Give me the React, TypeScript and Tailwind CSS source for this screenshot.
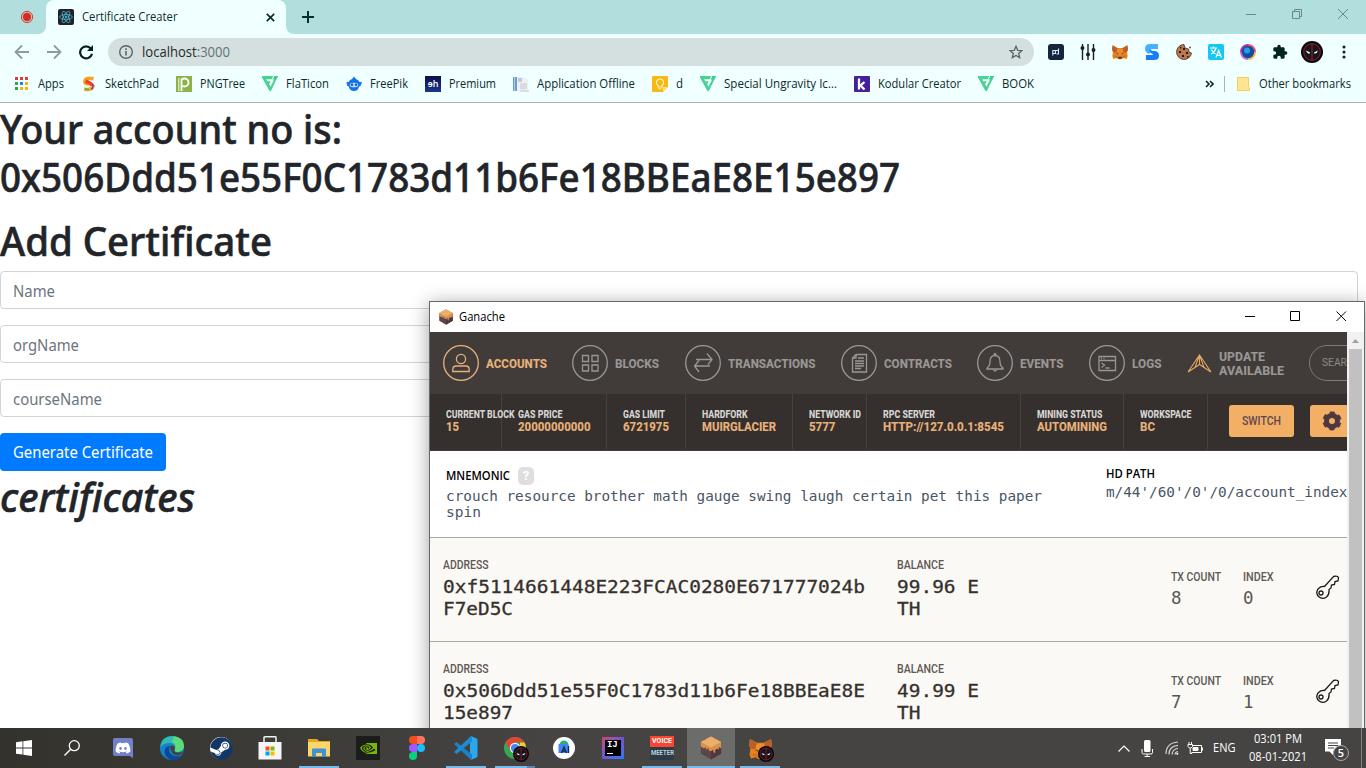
import { useLayoutEffect, useRef, useState, type ReactNode } from "react";
import { FaDiscord, FaSteam } from "react-icons/fa";
import { SiNvidia } from "react-icons/si";

/* Text set to an exact advance width, whatever the substitute font measures. */
function T({ w, className = "", children }: { w: number; className?: string; children: ReactNode }) {
  const ref = useRef<HTMLSpanElement>(null);
  const [scale, setScale] = useState(1);
  useLayoutEffect(() => {
    if (ref.current && ref.current.offsetWidth) {
      const box = ref.current.getBoundingClientRect();
      setScale((s) => w / (box.width / s));
    }
  }, [w]);
  return (
    <span className={`block shrink-0 whitespace-pre ${className}`} style={{ width: w }}>
      <span ref={ref} className="inline-block origin-left" style={{ transform: `scaleX(${scale})` }}>
        {children}
      </span>
    </span>
  );
}

const Flaticon = () => (
  <svg width="16" height="16" viewBox="0 0 16 16">
    <path d="M0 0h11.500L9.800 3.200H4.200l1 2h3.600L7.300 8.200l1.200 2.600L13.800 0H16L9.200 14.500Q8.200 16 7.200 14.500L0 1.500Z" fill="#4ad295" />
    <path d="M12 0h4l-1.700 3.400h-4Z" fill="#3bd08c" />
    <path d="M11.800 0L7.600 8.300" stroke="#f0ffff" strokeWidth=".8" />
  </svg>
);

const AppsIcon = () => (
  <svg width="16" height="16" viewBox="0 0 16 16">
    <path d="M1 1h3v3H1zM6 1h3v3H6zM11 1h3v3h-3z" fill="#e53935" />
    <path d="M1 6h3v3H1z" fill="#34a853" />
    <path d="M6 6h3v3H6z" fill="#2f7cf0" />
    <path d="M11 6h3v3h-3zM6 11h3v3H6zM11 11h3v3h-3z" fill="#f9b208" />
    <path d="M1 11h3v3H1z" fill="#2e9e4b" />
  </svg>
);

const SketchPadIcon = () => (
  <svg width="16" height="16" viewBox="0 0 16 16" fill="none" strokeWidth="3.600">
    <path d="M12.500 2.800Q5 1 4 4.500T8 8" stroke="#f9a21b" />
    <path d="M4.500 5Q12 8 12 11" stroke="#e7452f" />
    <path d="M12 10Q11 14.500 3 13.200" stroke="#f2b61d" />
    <path d="M11 8.500q2 3-1 5" stroke="#8b3fb0" strokeWidth="1.500" />
    <path d="M4 12.500q2 1.500 4 1" stroke="#54a847" strokeWidth="1.500" />
  </svg>
);

const PngTreeIcon = () => (
  <svg width="16" height="16" viewBox="0 0 16 16" fill="none">
    <path d="M0 0h16v16H0z" fill="#8db348" />
    <path d="M5.500 15V2.500M5.500 3.500q1.500-1 3-1a4 4 0 0 1 0 8Q7 10.500 5.500 9.800" stroke="#fff" strokeWidth="1.800" />
    <path d="M2.800 2v13" stroke="#fff" strokeWidth=".9" />
  </svg>
);

const FreepikIcon = () => (
  <svg width="16" height="16" viewBox="0 0 16 16">
    <path d="M6 3l2-2.500L10 3q2.500 1 3.500 3H16l-1.500 4-1.500.5Q12 15 8 15t-5.200-4.500L1 9.500.500 6h2Q3.500 4 6 3Z" fill="#1473e6" />
    <ellipse cx="8" cy="9" rx="4.200" ry="2.300" fill="#b9dcff" />
    <circle cx="6" cy="8.800" r="1.200" fill="#1456c0" />
    <circle cx="10" cy="8.800" r="1.200" fill="#1456c0" />
  </svg>
);

const DhIcon = () => (
  <span className="flex h-4 w-4 items-center justify-center bg-linear-to-b from-[#0a1146] to-[#1a3591] font-['Open_Sans',sans-serif] text-[9px] font-semibold text-white">
    ɘh
  </span>
);

const DocIcon = () => (
  <svg width="16" height="16" viewBox="0 0 16 16">
    <path d="M0 1h4v14H0z" fill="#6a9fcf" />
    <path d="M1.500 1v14" stroke="#a8cdea" />
    <path d="M4 1h8l3 3v11H4z" fill="#eef0f4" />
    <path d="M5 2h4v4H5z" fill="#c4cad4" />
    <path d="M7 8h7M7 10h7M7 12h7M7 15h9" stroke="#b5bac6" strokeWidth=".8" />
  </svg>
);

const KeepIcon = () => (
  <svg width="16" height="16" viewBox="0 0 16 16" fill="none">
    <path d="M1 0h14q1 0 1 1v10l-5 5H1q-1 0-1-1V1q0-1 1-1Z" fill="#f5b912" />
    <path d="M16 11l-5 5v-5Z" fill="#fbe08a" />
    <path d="M6 9.500C3.500 8 4 3 8 3s4.500 5 2 6.500V11H6ZM6.500 12.700h3" stroke="#fff3cf" strokeWidth="1.100" />
  </svg>
);

const KodularIcon = () => (
  <svg width="16" height="16" viewBox="0 0 16 16">
    <rect width="16" height="16" rx="1" fill="#44209c" />
    <path d="M5 2.500v11M10.500 6l-4 3.500 4 4" stroke="#fff" strokeWidth="2.300" fill="none" />
  </svg>
);

const bookmarks: [ReactNode, string, number][] = [
  [<AppsIcon />, "Apps", 26],
  [<SketchPadIcon />, "SketchPad", 54],
  [<PngTreeIcon />, "PNGTree", 45],
  [<Flaticon />, "FlaTicon", 43],
  [<FreepikIcon />, "FreePik", 38],
  [<DhIcon />, "Premium", 47],
  [<DocIcon />, "Application Offline", 98],
  [<KeepIcon />, "d", 7],
  [<Flaticon />, "Special Ungravity Ic...", 113],
  [<KodularIcon />, "Kodular Creator", 83],
  [<Flaticon />, "BOOK", 32],
];

const Fox = ({ size }: { size: number }) => (
  <svg width={size} height={size} viewBox="0 0 24 24">
    <path d="M1 2l7.500 4h7L23 2l1 6-1.500 4.500L23.500 18 22 22.500l-5-1.500-2.500 2h-5L7 21l-5 1.500L.500 18 1.500 12.500 0 8Z" fill="#e8821e" />
    <path d="M1 2l8 5-1.500 6-6-1L0 8ZM23 2l-8 5 1.500 6 6-1L24 8Z" fill="#b9602a" />
    <path d="M8 7h8l1.500 6L12 16l-5.500-3Z" fill="#f08c2e" />
    <path d="M6 13l3 .5.500 2ZM18 13l-3 .5-.5 2Z" fill="#40302a" />
    <path d="M9.500 20l.5-1h4l.5 1-.5 2h-4Z" fill="#4a342a" />
    <path d="M2 18l6-1 1 4-2 .500ZM22 18l-6-1-1 4 2 .500Z" fill="#d0731f" />
  </svg>
);

const Deadpool = ({ size }: { size: number }) => (
  <svg width={size} height={size} viewBox="0 0 22 22">
    <circle cx="11" cy="11" r="11" fill="#08080b" />
    <circle cx="11" cy="11" r="8.300" fill="#16161b" stroke="#7c1c2e" strokeWidth="1.200" />
    <path d="M11 2.500v17" stroke="#7c1c2e" strokeWidth="1.400" />
    <path d="M5 9.500l4 2-.5 1.200q-2.700-.200-3.500-3.200ZM17 9.500l-4 2 .5 1.200q2.700-.200 3.500-3.200Z" fill="#fff" />
  </svg>
);

const Cake = ({ size }: { size: number }) => (
  <svg width={size} height={size} viewBox="0 0 24 26">
    <path d="M1 7l11 6 11-6v12l-11 6.500L1 19Z" fill="#5e454b" />
    <path d="M12 13l11-6v12l-11 6.500Z" fill="#503840" />
    <path d="M12 .500L23 6.500v7l-2.500-1.500v3l-2-1.500-2 2v3l-2-1v-3l-2.500 2-2.500-1v-2.500L6.500 15V12l-2 1.500L1 11.500v-5Z" fill="#d9924c" />
    <path d="M12 .500l11 6-11 6-11-6Z" fill="#eaaf68" />
  </svg>
);

function Extensions() {
  return (
    <div className="flex items-center gap-4 pl-[14px]">
      <svg width="16" height="16" viewBox="0 0 16 16">
        <rect width="16" height="16" rx="3" fill="#12263f" />
        <path d="M4.800 11.500V6.500h2.700v3H5M8.500 10h2V4.500M7.500 6.500h3.500" stroke="#dfe6ee" strokeWidth="1.100" fill="none" />
      </svg>
      <svg width="16" height="16" viewBox="0 0 16 16" stroke="#1a2024" strokeWidth="1.400" fill="#1a2024">
        <path d="M2.500 0v16M8 0v16M13.500 0v16" />
        <circle cx="2.500" cy="4" r="1.300" />
        <circle cx="8" cy="10.500" r="1.300" />
        <circle cx="13.500" cy="6" r="1.300" />
      </svg>
      <Fox size={16} />
      <svg width="16" height="16" viewBox="0 0 16 16" fill="none">
        <path d="M14 0v5H8Q6 5 8 7L5 10Q1 8 1 5 1 0 6 0Z" fill="#45b1ff" />
        <path d="M5.500 5.500Q7 7 10 7q5 0 5 4.500T10 16H2v-5h6q2 0 0-1.500-3-1-2.500-4Z" fill="#187df5" />
      </svg>
      <svg width="16" height="16" viewBox="0 0 16 16">
        <path d="M8 .500a7.500 7.500 0 1 0 7.500 8.500L13 8l-.5-3L9 4Z" fill="#b97850" stroke="#4a2c20" strokeWidth=".8" />
        <path d="M3 7h2v2H3zM7 4h2v2H7zM6 11h2v2H6zM10 8h2v2h-2zM11 12h1.500v1.500H11zM4 3h1.500v1.500H4z" fill="#2c1811" />
        <circle cx="14" cy="3.500" r=".9" fill="#6b3f2b" />
      </svg>
      <svg width="16" height="16" viewBox="0 0 16 16" fill="none" stroke="#fff" strokeWidth="1.200">
        <rect width="16" height="16" rx="2" fill="#13c8f5" stroke="none" />
        <path d="M2 4h7M5.500 2.500V4M3 10q4-2 5-6M3.500 5.500q1 3 4 4.500M8 13.500l2.700-7 2.700 7M9 11.300h3.500" />
      </svg>
      <svg width="16" height="16" viewBox="0 0 16 16" fill="none">
        <circle cx="8" cy="8" r="7.300" fill="#0c4f9e" />
        <path d="M8 .900A7.100 7.100 0 0 1 15.100 8" stroke="#f04f78" strokeWidth="1.800" />
        <path d="M15.100 8A7.100 7.100 0 0 1 8 15.100" stroke="#ffb25a" strokeWidth="1.800" />
        <path d="M8 15.100A7.100 7.100 0 0 1 .900 8" stroke="#c06bd6" strokeWidth="1.800" />
        <path d="M.900 8A7.100 7.100 0 0 1 8 .900" stroke="#c02f9e" strokeWidth="1.800" />
        <circle cx="7" cy="6.500" r="3" fill="#2d9ae8" />
      </svg>
      <svg width="16" height="16" viewBox="0 0 24 24" fill="#00251f">
        <path d="M20.500 11H19V7c0-1.100-.9-2-2-2h-4V3.500a2.500 2.500 0 0 0-5 0V5H4c-1.100 0-2 .9-2 2v3.800h1.500a2.700 2.700 0 0 1 0 5.400H2V20c0 1.100.9 2 2 2h3.800v-1.500a2.700 2.700 0 0 1 5.400 0V22H17c1.100 0 2-.9 2-2v-4h1.500a2.500 2.500 0 0 0 0-5z" />
      </svg>
      <div className="-ml-[3px] flex items-center gap-[19px]">
        <Deadpool size={22} />
        <svg width="4" height="16" viewBox="0 0 4 16" fill="#00251f">
          <circle cx="2" cy="3" r="1.500" />
          <circle cx="2" cy="8" r="1.500" />
          <circle cx="2" cy="13" r="1.500" />
        </svg>
      </div>
    </div>
  );
}

function Browser() {
  return (
    <header className="shrink-0 font-['Open_Sans','Noto_Sans',sans-serif] text-[12px] text-[#0b2a2a]">
      <div className="flex h-[34px] bg-[#b1dfdd]">
        <div className="flex w-[46px] justify-end bg-[#f0ffff]">
          <div className="flex h-full w-full items-center justify-center rounded-br-lg bg-[#b1dfdd] pl-2">
            <svg width="14" height="14" viewBox="0 0 14 14">
              <circle cx="7" cy="7" r="5.600" fill="none" stroke="#dc362b" strokeWidth="1" />
              <circle cx="7" cy="7" r="4.200" fill="#dc2a20" />
            </svg>
          </div>
        </div>
        <div className="bg-[#b1dfdd]">
          <div className="flex h-full w-[240px] items-center rounded-t-lg bg-[#f0ffff] pl-3">
            <svg width="16" height="16" viewBox="0 0 16 16" fill="none" stroke="#4fb8d3" strokeWidth=".8">
              <rect width="16" height="16" rx="2" fill="#20232a" stroke="none" />
              <ellipse cx="8" cy="8" rx="6.300" ry="2.500" />
              <ellipse cx="8" cy="8" rx="6.300" ry="2.500" transform="rotate(60 8 8)" />
              <ellipse cx="8" cy="8" rx="6.300" ry="2.500" transform="rotate(120 8 8)" />
              <circle cx="8" cy="8" r="1" fill="#4fb8d3" />
            </svg>
            <T w={95.5} className="ml-2">Certificate Creater</T>
            <svg className="ml-[88px]" width="9" height="9" viewBox="0 0 9 9" stroke="#0b2a2a" strokeWidth="1.700">
              <path d="M.800.800l7.400 7.400M8.200.800L.800 8.200" />
            </svg>
          </div>
        </div>
        <div className="bg-[#f0ffff]">
          <div className="flex h-full w-[960px] items-center rounded-bl-lg bg-[#b1dfdd] pl-4">
            <svg width="12" height="12" viewBox="0 0 12 12" stroke="#04302c" strokeWidth="2">
              <path d="M6 0v12M0 6h12" />
            </svg>
          </div>
        </div>
        <div className="flex flex-1 items-start gap-[36px] pt-[9px]">
          <svg className="shrink-0" width="10" height="10" viewBox="0 0 10 10" stroke="#6b8685" fill="none">
            <path d="M0 5.500h10" />
          </svg>
          <svg className="shrink-0" width="10" height="10" viewBox="0 0 10 10" stroke="#6b8685" fill="none">
            <path d="M.500 2.500h7v7h-7zM2.500 2.500v-2h7v7h-2" />
          </svg>
          <svg className="shrink-0" width="10" height="10" viewBox="0 0 10 10" stroke="#6b8685" fill="none">
            <path d="M0 0l10 10M10 0L0 10" />
          </svg>
        </div>
      </div>

      <div className="flex h-9 items-center bg-[#f0ffff] pl-[14px]">
        <svg width="80" height="16" viewBox="0 0 80 16" fill="none">
          <path d="M15 8H2M8 1.500L1.500 8 8 14.500" stroke="#8a9d9d" strokeWidth="1.800" />
          <path d="M33 8h13M40 1.500L46.500 8 40 14.500" stroke="#8a9d9d" strokeWidth="1.800" />
          <path d="M76.800 4.500A6 6 0 1 0 78 9.700" stroke="#04211f" strokeWidth="2.200" />
          <path d="M79 1v6h-6z" fill="#04211f" />
        </svg>
        <div className="ml-[14px] flex h-7 w-[926px] items-center rounded-full bg-[#d4e0df] pl-[11px] pr-[11px]">
          <svg width="14" height="14" viewBox="0 0 14 14" fill="none" stroke="#5a6464">
            <circle cx="7" cy="7" r="6.300" strokeWidth="1.400" />
            <path d="M7 6v4.500M7 3.300v1.600" strokeWidth="1.600" />
          </svg>
          <T w={88} className="ml-[9px] pb-px text-[14px]">
            <span className="text-[#1f2b2b]">localhost</span>
            <span className="text-[#657272]">:3000</span>
          </T>
          <svg className="ml-auto" width="14" height="14" viewBox="0 0 14 14" fill="none" stroke="#5a6464" strokeWidth="1.300">
            <path d="M7 1.300l1.700 4 4.300.300-3.300 2.800 1 4.200L7 10.400l-3.700 2.200 1-4.200L1 5.600l4.300-.300Z" />
          </svg>
        </div>
        <Extensions />
      </div>

      <div className="flex h-[33px] items-center border-b border-[#a9b5b5] bg-[#f0ffff] pb-[5px] pl-[14px]">
        <div className="flex gap-[17px]">
          {bookmarks.map(([icon, label, w], i) => (
            <div key={i} className="flex items-center gap-2">
              <span className="block w-4">{icon}</span>
              <T w={w}>{label}</T>
            </div>
          ))}
        </div>
        <svg className="ml-[171px]" width="9" height="8" viewBox="0 0 9 8" fill="none" stroke="#0b2a2a" strokeWidth="1.600">
          <path d="M1 1l3 3-3 3M5 1l3 3-3 3" />
        </svg>
        <span className="ml-[10px] h-4 w-px bg-[#a3b8b8]" />
        <svg className="ml-3" width="13" height="14" viewBox="0 0 13 14">
          <path d="M.500.500h11v9l1 1v3H.500z" fill="#ffe591" stroke="#f2cd5b" />
        </svg>
        <T w={92} className="ml-[9px]">Other bookmarks</T>
      </div>
    </header>
  );
}

const h1 = "text-[39.500px] leading-[48px] font-medium text-[#212529] [-webkit-text-stroke:0.6px_#212529]";

function Field({ label, w }: { label: string; w: number }) {
  return (
    <div className="mb-4 flex h-[38px] items-center rounded border border-[#ced4da] bg-white px-3 pt-[3px] text-[#6c757d]">
      <T w={w}>{label}</T>
    </div>
  );
}

function Page() {
  return (
    <main className="h-full bg-white pt-[2px] font-['Noto_Sans','Open_Sans',sans-serif] text-[15.500px]">
      <T w={342} className={h1}>Your account no is:</T>
      <T w={900} className={h1}>0x506Ddd51e55F0C1783d11b6Fe18BBEaE8E15e897</T>
      <T w={272} className={`${h1} mt-4`}>Add Certificate</T>
      <div className="mt-[6px] w-[1358px]">
        <Field label="Name" w={42} />
        <Field label="orgName" w={66} />
        <Field label="courseName" w={89} />
      </div>
      <button className="flex h-[38px] w-[166px] items-center rounded bg-[#007bff] pl-[13px] pt-[2px] text-white">
        <T w={140}>Generate Certificate</T>
      </button>
      <T w={195} className={`${h1} mt-[2px] italic`}>certificates</T>
    </main>
  );
}

const navIcons: Record<string, ReactNode> = {
  ACCOUNTS: (
    <>
      <circle cx="18" cy="14" r="4.600" />
      <path d="M9.800 26.500v-2q0-3.500 3.500-3.500h9.400q3.500 0 3.500 3.500v2Z" />
    </>
  ),
  BLOCKS: <path d="M10.500 10.500h6v6h-6zM20 10.500h6v6h-6zM10.500 20h6v6h-6zM20 20h6v6h-6z" />,
  TRANSACTIONS: <path d="M11 14.500h15.500M22 8.500l5 6-4 5M25 21H9.500M14 15.500L9.500 21l4.500 6" />,
  CONTRACTS: (
    <>
      <path d="M15 9.500h10.500v17.500h-14V13ZM15 9.500V13h-3.500" />
      <path d="M17 13h6M14 16h9M14 18.500h9M14 21h9M14 23.500h6" />
    </>
  ),
  EVENTS: (
    <>
      <path d="M10 23q3-2 3-6.500 0-6 5-6t5 6q0 4.500 3 6.500v1H10ZM17 10.500q0-2 1-2t1 2" />
      <path d="M16 24.500q2 3 4 0" />
    </>
  ),
  LOGS: <path d="M10 11.500h16.500v14H10zM10 15.500h16.500M12 13.500h1M14.500 13.500h1M12.500 18l3 2-3 2.500M16.500 23h4" />,
};

function Nav() {
  const items: [string, number][] = [
    ["ACCOUNTS", 61],
    ["BLOCKS", 44],
    ["TRANSACTIONS", 87.5],
    ["CONTRACTS", 68],
    ["EVENTS", 43.5],
    ["LOGS", 29.5],
  ];
  return (
    <nav className="flex h-[62px] items-center gap-[25.400px] overflow-hidden bg-[#413c39] pl-[13px] text-[13.500px] font-extrabold text-[#999694]">
      {items.map(([label, w], i) => (
        <div key={label} className={`flex shrink-0 items-center gap-[7px] ${i === 0 ? "text-[#e9b07a]" : ""}`}>
          <svg width="36" height="36" viewBox="0 0 36 36" fill="none" stroke="currentColor" strokeWidth="1.300">
            <circle cx="18" cy="18" r="17.300" />
            {navIcons[label]}
          </svg>
          <T w={w}>{label}</T>
        </div>
      ))}
      <div className="flex shrink-0 items-center gap-[7px]">
        <svg width="25" height="19" viewBox="0 0 25 19" fill="none" stroke="#e5a763" strokeWidth="1.100">
          <path d="M12.500 1L24 18l-11.500-7.500L1 18ZM12.500 1v9.500M12.500 1L8 13.400M12.500 1L17 13.400" />
        </svg>
        <div className="leading-[14px]">
          <T w={46}>UPDATE</T>
          <T w={65}>AVAILABLE</T>
        </div>
      </div>
      <div className="flex h-9 w-[150px] shrink-0 items-center rounded-full border border-[#7d7a78] pl-3 text-[11px] font-normal text-[#8d8a88]">
        <T w={31.5}>SEARC</T>
      </div>
    </nav>
  );
}

function Status({ cell, label, lw, value, vw }: { cell: string; label: string; lw: number; value: string; vw: number }) {
  return (
    <div className={`${cell} h-[55px] shrink-0 border-r border-[#47423f] pl-4 pt-[15px]`}>
      <T w={lw} className="text-[10px] leading-[12px] text-[#d8d6d4]">{label}</T>
      <T w={vw} className="text-[12.500px] leading-[12px] text-[#e9b07a]">{value}</T>
    </div>
  );
}

function StatusBar() {
  return (
    <div className="flex h-[57px] overflow-hidden border-b border-[#413c39] bg-[#35302d] font-extrabold">
      <Status cell="w-[71.500px]" label="CURRENT BLOCK" lw={68.5} value="15" vw={13} />
      <Status cell="w-[105.500px]" label="GAS PRICE" lw={44.5} value="20000000000" vw={72.5} />
      <Status cell="w-[79px]" label="GAS LIMIT" lw={42} value="6721975" vw={46} />
      <Status cell="w-[107px]" label="HARDFORK" lw={45.5} value="MUIRGLACIER" vw={74} />
      <Status cell="w-[74px]" label="NETWORK ID" lw={52} value="5777" vw={26.5} />
      <Status cell="w-[154px]" label="RPC SERVER" lw={52} value="HTTP://127.0.0.1:8545" vw={121} />
      <Status cell="w-[103px]" label="MINING STATUS" lw={65.5} value="AUTOMINING" vw={70} />
      <Status cell="w-[84px]" label="WORKSPACE" lw={51.5} value="BC" vw={15} />
      <div className="flex shrink-0 gap-4 pl-[21px] pt-[11px]">
        <button className="flex h-8 w-[65px] items-center justify-center rounded-[3px] bg-[#f3af66] text-[12.500px] font-medium text-[#5e464d]">
          <T w={39}>SWITCH</T>
        </button>
        <button className="flex h-8 w-[45px] items-center rounded-[3px] bg-[#f3af66] pl-3">
          <svg width="20" height="20" viewBox="0 0 20 20">
            <circle cx="10" cy="10" r="5.500" fill="none" stroke="#4e3840" strokeWidth="5" />
            <circle cx="10" cy="10" r="8" fill="none" stroke="#4e3840" strokeWidth="3" strokeDasharray="4.800 3.578" strokeDashoffset="-1.800" />
          </svg>
        </button>
      </div>
    </div>
  );
}

function Mnemonic() {
  return (
    <div className="flex h-[87px] overflow-hidden border-b border-[#aaa9a7] bg-white pl-4 font-['DejaVu_Sans_Mono',monospace] text-[13.500px] leading-4 text-[#4a5565]">
      <div className="w-[660px] shrink-0 pt-4">
        <div className="flex h-[18px] items-center gap-2">
          <T w={64} className="font-['Open_Sans',sans-serif] text-[12px] font-semibold text-black">MNEMONIC</T>
          <span className="flex h-[18px] w-4 items-center justify-center rounded-[5px] bg-[#dedede] font-['Roboto',sans-serif] text-[13px] font-bold text-white">?</span>
        </div>
        <T w={596} className="mt-[3px]">crouch resource brother math gauge swing laugh certain pet this paper</T>
        <T w={35}>spin</T>
      </div>
      <div className="shrink-0 pt-[15px]">
        <T w={49} className="font-['Open_Sans',sans-serif] text-[12px] font-semibold text-black">HD PATH</T>
        <T w={241.5} className="mt-[2px]">m/44'/60'/0'/0/account_index</T>
      </div>
    </div>
  );
}

const label = "h-4 text-[12px] leading-4 font-medium text-[#5d5854]";
const mono = "font-['DejaVu_Sans_Mono',monospace] text-[18.500px] leading-[22px] text-[#35302d] [-webkit-text-stroke:0.3px_#35302d]";
const count = "mt-[2px] font-['DejaVu_Sans_Mono',monospace] text-[17px] leading-[22px] text-[#5a5653]";

function Account({ a, aw, b, bw, bal, tx, index }: { a: string; aw: number; b: string; bw: number; bal: string; tx: string; index: string }) {
  return (
    <div className="flex h-[104px] overflow-hidden border-b border-[#aaa9a7] bg-[#faf9f5] pl-[13px] pt-[19px]">
      <div className="w-[454px] shrink-0">
        <T w={45.5} className={label}>ADDRESS</T>
        <T w={aw} className={`${mono} mt-[3px]`}>{a}</T>
        <T w={bw} className={mono}>{b}</T>
      </div>
      <div className="w-[274px] shrink-0">
        <T w={47} className={label}>BALANCE</T>
        <T w={82} className={`${mono} mt-[3px]`}>{bal}</T>
        <T w={23.5} className={mono}>TH</T>
      </div>
      <div className="w-[72px] shrink-0 pt-3">
        <T w={50} className={label}>TX COUNT</T>
        <T w={10.5} className={count}>{tx}</T>
      </div>
      <div className="w-[72px] shrink-0 pt-3">
        <T w={30.5} className={label}>INDEX</T>
        <T w={10.5} className={count}>{index}</T>
      </div>
      <svg className="mt-[18px] shrink-0" width="25" height="26" viewBox="0 0 25 26" fill="none" stroke="#1c1a19" strokeWidth="1.300">
        <path d="M9.500 11.500L18.500 1.500q4-1 5 1l-.5 3.500-3 .5-.5 3-3 .5-.5 3-2 1.500q.5 5-2.500 7.500-4 3-8-.5-3.500-4 0-8 2.500-2.500 6-2Z" />
        <circle cx="6" cy="18" r="2" />
      </svg>
    </div>
  );
}

function Ganache() {
  return (
    <section className="absolute left-[429px] top-[198px] flex h-[440px] w-[936px] flex-col border border-[#66686a] bg-white font-['Roboto',sans-serif] shadow-[0_3px_18px_rgba(0,0,0,0.38)]">
      <div className="flex h-[30px] shrink-0 items-center bg-white pl-2 pb-px">
        <Cake size={16} />
        <T w={46} className="ml-[5px] font-['Open_Sans',sans-serif] text-[12px] text-black">Ganache</T>
        <svg className="ml-auto mr-[17px]" width="102" height="11" viewBox="0 0 102 11" fill="none" stroke="#000">
          <path d="M0 5.500h10" />
          <path d="M45.500.500h9v9h-9z" />
          <path d="M91.500.500l9.500 9.500M101 .500L91.500 10" />
        </svg>
      </div>
      <div className="flex min-h-0 flex-1">
        <div className="w-[917px] shrink-0 overflow-hidden">
          <Nav />
          <StatusBar />
          <Mnemonic />
          <Account a="0xf5114661448E223FCAC0280E671777024b" aw={422} b="F7eD5C" bw={70} bal="99.96 E" tx="8" index="0" />
          <Account a="0x506Ddd51e55F0C1783d11b6Fe18BBEaE8E" aw={422} b="15e897" bw={70} bal="49.99 E" tx="7" index="1" />
        </div>
        <div className="flex w-[17px] flex-col bg-[#f1f1f1] pl-[2px] pr-[2px]">
          <svg width="13" height="17" viewBox="0 0 13 17" className="shrink-0">
            <path d="M3 11h7L6.500 7Z" fill="#a0a0a0" />
          </svg>
          <div className="flex-1 bg-[#c1c1c1]" />
        </div>
      </div>
    </section>
  );
}

const DiscordIcon = () => (
  <svg width="20" height="20" viewBox="0 0 20 20">
    <path d="M2 0h16q2 0 2 2v18l-3.500-2H2q-2 0-2-2V2Q0 0 2 0Z" fill="#7180c9" />
    <FaDiscord x="2" y="2" size={16} color="#fff" />
  </svg>
);

const EdgeIcon = () => (
  <svg width="24" height="24" viewBox="0 0 24 24">
    <circle cx="12" cy="12" r="12" fill="#1583c9" />
    <path d="M0 11Q2 0 12 0q11 0 12 10 0 5-6 6-4 0-3-3 1-5-5-6-6 0-10 4Z" fill="#31b9b4" />
    <path d="M14 .200Q24 2 24 10q0 5-6 6-4 0-3-3 2-5-3-7Z" fill="#5bdc79" />
    <path d="M10 10q-3 8 5 10 4 1 7-1-5 7-12 4.500Q3 20 5 13q1-3 5-3Z" fill="#0c4a98" />
    <path d="M10 10.500q2-2 4.500 0 1 2-.5 4.500 3 3 9 .500-1 3-4 4-8 1-9-9Z" fill="#45413b" />
  </svg>
);

const StoreIcon = () => (
  <svg width="24" height="24" viewBox="0 0 24 24">
    <path d="M6 7V1.500Q6 .800 6.800.800h10.400q.8 0 .8.700V7" fill="none" stroke="#f2f2f2" strokeWidth="1.500" />
    <path d="M.500 6h23v17.500h-23z" fill="#f5f5f5" />
    <path d="M7.500 10.500h4v4h-4z" fill="#f25022" />
    <path d="M12.500 10.500h4v4h-4z" fill="#7fba00" />
    <path d="M7.500 15.500h4v4h-4z" fill="#00a4ef" />
    <path d="M12.500 15.500h4v4h-4z" fill="#ffb900" />
  </svg>
);

const ExplorerIcon = () => (
  <svg width="22" height="20" viewBox="0 0 22 20">
    <path d="M0 1h9l2 2h11v15H0z" fill="#e5a91b" />
    <path d="M0 4h22v14.500H0z" fill="#fcd56b" />
    <path d="M4 19v-7.500q0-1 1-1h12q1 0 1 1V19h-4v-4H8v4Z" fill="#3f92d8" />
  </svg>
);

const FigmaIcon = () => (
  <svg width="16" height="24" viewBox="0 0 16 24">
    <path d="M4 0h4v8H4a4 4 0 0 1 0-8Z" fill="#f24e1e" />
    <path d="M8 0h4a4 4 0 0 1 0 8H8Z" fill="#ff7262" />
    <path d="M4 8h4v8H4a4 4 0 0 1 0-8Z" fill="#a259ff" />
    <circle cx="12" cy="12" r="4" fill="#1abcfe" />
    <path d="M4 16h4v4a4 4 0 1 1-4-4Z" fill="#0acf83" />
  </svg>
);

const CodeIcon = () => (
  <svg width="24" height="24" viewBox="0 0 24 24">
    <path d="M17 0l6.500 3v18L17 24l-1-5V5Z" fill="#2ba7ee" />
    <path d="M0 8l2.500-2L18 18.500V24h-1Z" fill="#1a80c8" />
    <path d="M0 16l2.500 2L18 5.500V0h-1Z" fill="#1d8ad4" />
  </svg>
);

const Badge = ({ children }: { children: ReactNode }) => (
  <span className="relative block">
    {children}
    <span className="absolute left-[9px] top-[9px]">
      <Deadpool size={16} />
    </span>
  </span>
);

const ChromeIcon = () => (
  <Badge>
    <svg width="22" height="22" viewBox="0 0 22 22">
      <circle cx="11" cy="11" r="11" fill="#35a853" />
      <path d="M1.500 5.500A11 11 0 0 1 20.500 5.500H11L6.500 14Z" fill="#df4638" />
      <path d="M20.500 5.500A11 11 0 0 1 11 22l5-8.500V5.500Z" fill="#fcc934" />
      <circle cx="11" cy="11" r="5.200" fill="#fff" />
      <circle cx="11" cy="11" r="4.100" fill="#4285f4" />
    </svg>
  </Badge>
);

const StudioIcon = () => (
  <svg width="22" height="22" viewBox="0 0 22 22">
    <circle cx="11" cy="11" r="11" fill="#fff" />
    <path d="M6.500 8a4.500 4.500 0 0 1 9 0Z" fill="#27b36b" />
    <path d="M5.500 7h10v9h-10z" fill="#4285f4" />
    <path d="M8.500 16l2.500-6 2.500 6M9.500 14h3M15.500 9v7" stroke="#0b2f52" strokeWidth="1.400" fill="none" />
  </svg>
);

const IdeaIcon = () => (
  <span className="flex h-[22px] w-[22px] items-center justify-center bg-linear-to-br from-[#d13c68] via-[#6a53d6] to-[#0a7cf5]">
    <span className="flex h-4 w-4 flex-col justify-between bg-black px-[2px] pb-[2px]">
      <span className="font-['Liberation_Mono',monospace] text-[9px] leading-[10px] font-bold tracking-tight text-white">IJ</span>
      <span className="h-px w-[6px] bg-white" />
    </span>
  </span>
);

const VoiceIcon = () => (
  <span className="block h-6 w-6 overflow-hidden bg-[#2b3b47] font-['Roboto',sans-serif] text-[7px] font-bold text-white">
    <span className="flex h-[11px] items-center bg-[#fb4531] pl-[2px]"><T w={20}>VOICE</T></span>
    <span className="flex h-[13px] items-center pl-px text-[#bfd0da]"><T w={23}>MEETER</T></span>
  </span>
);

const SteamIcon = () => (
  <span className="flex h-[22px] w-[22px] items-center justify-center rounded-full bg-white">
    <FaSteam size={23} color="#123668" className="shrink-0" />
  </span>
);

const NvidiaIcon = () => (
  <span className="flex h-6 w-6 items-center justify-center bg-[#1c1c1c]">
    <SiNvidia size={17} color="#76b900" />
  </span>
);

const tasks: [ReactNode, string][] = [
  [<DiscordIcon />, ""],
  [<EdgeIcon />, ""],
  [<SteamIcon />, ""],
  [<StoreIcon />, ""],
  [<ExplorerIcon />, "w-10"],
  [<NvidiaIcon />, ""],
  [<FigmaIcon />, ""],
  [<CodeIcon />, "w-10"],
  [<ChromeIcon />, "w-10 border-r-8 border-[#5785ac]"],
  [<StudioIcon />, ""],
  [<IdeaIcon />, ""],
  [<VoiceIcon />, "w-10"],
  [<Cake size={24} />, "w-12"],
  [<Badge><Fox size={23} /></Badge>, "w-10"],
];

function Taskbar() {
  return (
    <footer className="relative flex h-10 shrink-0 bg-linear-to-r from-[#34322c] via-[#454443] via-40% to-[#454443] font-['Open_Sans',sans-serif] text-[12px] text-white">
      <div className="flex w-12 items-center justify-center">
        <svg width="16" height="16" viewBox="0 0 16 16" fill="#fff">
          <path d="M0 2.200l6.500-.9v6.200H0zM7.300 1.200L16 0v7.500H7.300zM0 8.400h6.500v6.200L0 13.700zM7.300 8.400H16V16l-8.700-1.200z" />
        </svg>
      </div>
      <div className="flex w-12 items-center justify-center">
        <svg width="16" height="16" viewBox="0 0 16 16" fill="none" stroke="#fff" strokeWidth="1.300">
          <circle cx="10.300" cy="5.700" r="5" />
          <path d="M6.700 9.300L.500 15.500" />
        </svg>
      </div>
      <div className="ml-[3px] flex gap-px">
        {tasks.map(([icon, bar], i) => (
          <div key={i} className={`flex w-12 flex-col items-center ${i === 12 ? "bg-[#6c6c6b]" : ""}`}>
            <div className="flex h-[38px] items-center pt-[2px]">{icon}</div>
            <span className={`h-[2px] bg-[#76b9ed] ${bar}`} />
          </div>
        ))}
      </div>
      <div className="ml-auto flex items-center pr-[16px]">
        <svg width="12" height="7" viewBox="0 0 12 7" fill="none" stroke="#fff" strokeWidth="1.200">
          <path d="M.500 6.500L6 1l5.500 5.500" />
        </svg>
        <svg className="ml-[11px]" width="12" height="17" viewBox="0 0 12 17" fill="none" stroke="#fff">
          <rect x="3" y="0" width="6.500" height="12" rx="1.500" fill="#fff" stroke="none" />
          <path d="M1 9v3.500q0 1.500 1.500 1.500h7.500q1.500 0 1.500-1.500V9M6.200 14v2.500M3.500 16.500h5.500" />
        </svg>
        <svg className="ml-[12px]" width="14" height="14" viewBox="0 0 14 14" fill="none" stroke="#d5d5d4" strokeWidth="1.200">
          <path d="M1 13Q1 2 13 1M4 13.500Q4 5 13 4.300M7 13.500Q7.500 8 13 7.500" />
          <path d="M10 13.500Q10 11 13 10.500" />
          <circle cx="12.300" cy="12.700" r="1" fill="#fff" stroke="none" />
        </svg>
        <svg className="ml-[8px]" width="16" height="13" viewBox="0 0 16 13" fill="none" stroke="#fff">
          <path d="M5.500 3.500h9v7h-10M15.500 5.500v3M1 2.500h4.500v2L4 6H2.500L1 4.500ZM2 0v2.500M4.500 0v2.500M3.200 6v5.500h2" />
          <path d="M6 5.500h5v3H6z" fill="#fff" />
        </svg>
        <T w={22.5} className="ml-[10px]">ENG</T>
        <div className="ml-[14px] leading-[18px]">
          <T w={48} className="ml-[5px]">03:01 PM</T>
          <T w={58}>08-01-2021</T>
        </div>
        <div className="relative ml-[18px] h-[26px] w-[25px]">
          <svg width="17" height="17" viewBox="0 0 17 17" className="mt-1">
            <path d="M0 0h16v12.500H8V16l-3.500-3.500H0Z" fill="#fff" />
            <path d="M3 4h10M3 6.500h10M3 9h6" stroke="#464544" />
          </svg>
          <span className="absolute left-[8px] top-[10px] flex h-4 w-4 items-center justify-center rounded-full border border-[#aaa] bg-[#464544] text-[11px] font-semibold">5</span>
        </div>
      </div>
      <span className="absolute right-[4px] top-0 h-10 w-px bg-[#81807f]" />
    </footer>
  );
}

export default function App() {
  return (
    <div className="flex h-[768px] w-[1366px] flex-col overflow-hidden">
      <Browser />
      <div className="relative h-[625px] shrink-0 overflow-hidden">
        <Page />
        <Ganache />
      </div>
      <Taskbar />
    </div>
  );
}
